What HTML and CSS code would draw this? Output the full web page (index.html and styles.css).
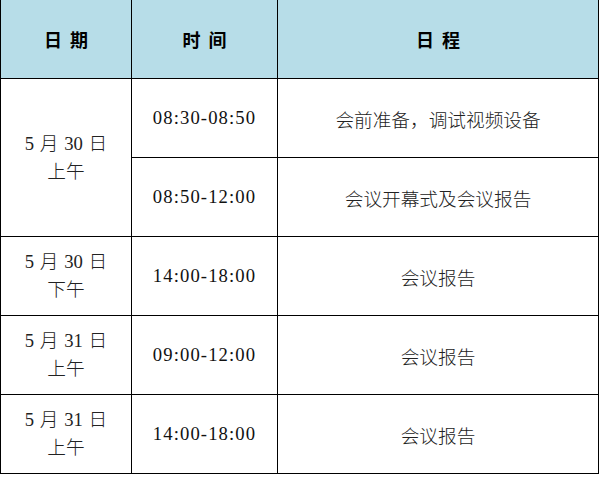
FILE: index.html
```html
<!DOCTYPE html>
<html lang="zh-CN">
<head>
<meta charset="utf-8">
<title>会议日程</title>
<link rel="stylesheet" href="styles.css">
</head>
<body>
<table class="schedule">
  <colgroup>
    <col class="col-date">
    <col class="col-time">
    <col class="col-agenda">
  </colgroup>
  <thead>
    <tr class="head-row">
      <th>日 期</th>
      <th>时 间</th>
      <th>日 程</th>
    </tr>
  </thead>
  <tbody>
    <tr class="body-row">
      <td class="date" rowspan="2">5 月 30 日<br>上午</td>
      <td class="time">08:30-08:50</td>
      <td class="agenda">会前准备，调试视频设备</td>
    </tr>
    <tr class="body-row">
      <td class="time">08:50-12:00</td>
      <td class="agenda">会议开幕式及会议报告</td>
    </tr>
    <tr class="body-row">
      <td class="date">5 月 30 日<br>下午</td>
      <td class="time">14:00-18:00</td>
      <td class="agenda">会议报告</td>
    </tr>
    <tr class="body-row">
      <td class="date">5 月 31 日<br>上午</td>
      <td class="time">09:00-12:00</td>
      <td class="agenda">会议报告</td>
    </tr>
    <tr class="body-row">
      <td class="date">5 月 31 日<br>上午</td>
      <td class="time">14:00-18:00</td>
      <td class="agenda">会议报告</td>
    </tr>
  </tbody>
</table>
</body>
</html>
```
FILE: styles.css
```css
html, body {
  margin: 0;
  padding: 0;
  background: #fff;
}

.schedule {
  border-collapse: collapse;
  table-layout: fixed;
  width: 598px;
  font-family: "Liberation Serif", "Noto Sans CJK SC", serif;
  font-size: 18.67px;
  color: #111;
}

.col-date { width: 131px; }
.col-time { width: 146px; }
.col-agenda { width: 321px; }

.schedule th,
.schedule td {
  border: 1px solid #000;
  padding: 0;
  text-align: center;
  vertical-align: middle;
}

.schedule th {
  border-top: none;
  background: #b7dde8;
  font-family: "Noto Sans CJK SC", sans-serif;
  font-weight: 700;
  font-size: 18px;
  word-spacing: 4px;
  height: 78px;
  color: #000;
}

.body-row td {
  height: 78px;
}

.date {
  line-height: 28px;
  word-spacing: 1px;
  font-weight: 300;
  color: #222;
}

.time {
  letter-spacing: 1.1px;
  padding-bottom: 2px;
}

.agenda {
  font-family: "Noto Sans CJK SC", sans-serif;
  font-weight: 300;
  color: #222;
  padding-bottom: 6px;
}
```
